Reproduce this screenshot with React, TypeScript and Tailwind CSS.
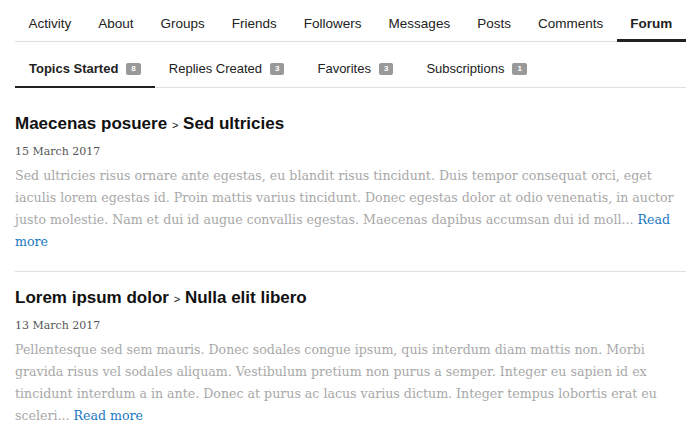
import React from "react";

const tabs = ["Activity","About","Groups","Friends","Followers","Messages","Posts","Comments","Forum"];
const sub: [string,string][] = [["Topics Started","8"],["Replies Created","3"],["Favorites","3"],["Subscriptions","1"]];
const posts = [
  {a:"Maecenas posuere",b:"Sed ultricies",d:"15 March 2017",t:"Sed ultricies risus ornare ante egestas, eu blandit risus tincidunt. Duis tempor consequat orci, eget iaculis lorem egestas id. Proin mattis varius tincidunt. Donec egestas dolor at odio venenatis, in auctor justo molestie. Nam et dui id augue convallis egestas. Maecenas dapibus accumsan dui id moll..."},
  {a:"Lorem ipsum dolor",b:"Nulla elit libero",d:"13 March 2017",t:"Pellentesque sed sem mauris. Donec sodales congue ipsum, quis interdum diam mattis non. Morbi gravida risus vel sodales aliquam. Vestibulum pretium non purus a semper. Integer eu sapien id ex tincidunt interdum a in ante. Donec at purus ac lacus varius dictum. Integer tempus lobortis erat eu sceleri..."},
];

export default function App() {
  return (
    <div className="w-[699px] h-[432px] overflow-hidden bg-white pl-[15px] pr-[13px] pt-[5px] text-[#222]" style={{fontFamily:"'Liberation Sans', Arial, sans-serif"}}>
      <div className="flex border-b border-[#e0e0e0] text-[13.5px]">
        {tabs.map(t=>(
          <div key={t} className={`px-[13.5px] pt-[9px] ${t==="Forum"?"font-bold border-b-[3px] border-[#222] mb-[-1px] pb-[5px]":"pb-[7px]"}`}>{t}</div>
        ))}
      </div>
      <div className="flex border-b border-[#e0e0e0] text-[13px] mt-[15px]">
        {sub.map(([t,n],i)=>(
          <div key={t} className={`flex items-center gap-[8px] px-[14px] pt-[2px] ${i===0?"font-bold border-b-2 border-[#222] mb-[-1px] pb-[7px]":"pb-[8px] mr-[5px]"}`}>
            {t}<span className="bg-[#999] text-white text-[8px] font-bold leading-none rounded-[2px] px-[5px] py-[2px]">{n}</span>
          </div>
        ))}
      </div>
      <div className="pt-[24px]">
        {posts.map((p,i)=>(
          <div key={i} className={`${i===0?"border-b border-[#e0e0e0] pb-[18px] mb-[14px]":""}`}>
            <div className="text-[17px] font-bold leading-[24px] text-[#111]">{p.a} <span className="text-[11px] font-normal">&gt;</span> {p.b}</div>
            <div className="text-[11px] text-[#555] mt-[7px] leading-[16px]" style={{fontFamily:"'DejaVu Serif', serif"}}>{p.d}</div>
            <div className="text-[12.6px] leading-[22px] text-[#a8a8a8] mt-[5px]" style={{fontFamily:"'DejaVu Serif', serif"}}>{p.t} <a className="text-[#1a78c2]">Read more</a></div>
          </div>
        ))}
      </div>
    </div>
  );
}
